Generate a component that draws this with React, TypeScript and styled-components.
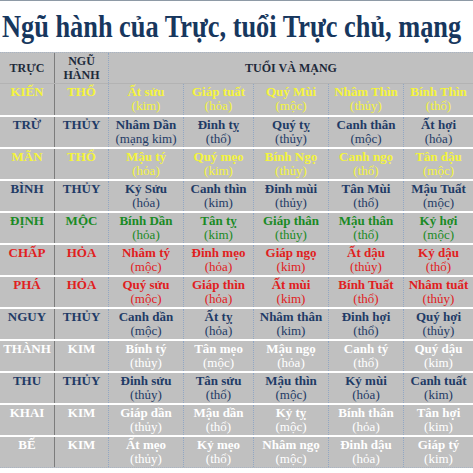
import React from "react";
import styled, { createGlobalStyle } from "styled-components";

const Global = createGlobalStyle`
  html, body { margin: 0; padding: 0; background: #ffffff; }
  body { width: 473px; height: 473px; overflow: hidden; font-family: "Liberation Serif", "Times New Roman", serif; }
`;

const Page = styled.div`
  width: 473px;
  height: 473px;
  background: #ffffff;
  border-top: 1px solid #8e9aa6;
  box-sizing: border-box;
  display: flex;
  flex-direction: column;
`;

const Title = styled.h1`
  margin: 0;
  height: 51px;
  box-sizing: border-box;
  padding: 9px 0 0 2px;
  font-family: "Liberation Serif", "Times New Roman", serif;
  font-weight: bold;
  font-size: 32px;
  line-height: 32px;
  color: #17375e;
  white-space: nowrap;
  overflow: hidden;
`;

const TitleText = styled.span`
  display: inline-block;
  transform: scaleX(0.823);
  transform-origin: left center;
`;

const Table = styled.div`
  display: flex;
  flex-direction: column;
  background: #c0c0c0;
  border-top: 1px dotted #a8b4c4;
  border-bottom: 1px dotted #a8b4c4;
`;

const COLS = "54px 54px 75px 70px 75px 75px 70px";

const HeaderRow = styled.div`
  display: grid;
  grid-template-columns: ${COLS};
  height: 31px;
  border-bottom: 1px solid #b3b3b3;
  box-sizing: border-box;
`;

const Row = styled.div<{ $first?: boolean }>`
  display: grid;
  grid-template-columns: ${COLS};
  height: ${(p) => (p.$first ? 31 : 32)}px;
  box-sizing: border-box;
  border-top: ${(p) => (p.$first ? "0" : "2px solid #ffffff")};
`;

type Divider = "none" | "solid" | "dotted";

const dividerStyle = (d: Divider) =>
  d === "solid" ? "1px solid #7c7c7c" : d === "dotted" ? "1px dotted #90a6c4" : "0";

const HeadCell = styled.div<{ $divider: Divider; $span?: number }>`
  grid-column: span ${(p) => p.$span ?? 1};
  border-left: ${(p) => dividerStyle(p.$divider)};
  display: flex;
  flex-direction: column;
  align-items: center;
  justify-content: center;
  font-weight: bold;
  font-size: 12px;
  line-height: 14px;
  color: #1e2a3a;
  text-align: center;
`;

const Cell = styled.div<{ $divider: Divider; $color: string }>`
  border-left: ${(p) => dividerStyle(p.$divider)};
  display: flex;
  flex-direction: column;
  align-items: center;
  padding-top: 1px;
  font-size: 13px;
  line-height: 14px;
  color: ${(p) => p.$color};
  text-align: center;
  white-space: nowrap;
`;

const Main = styled.span`
  font-weight: bold;
`;

const Sub = styled.span`
  font-weight: normal;
`;

const C = {
  yellow: "#f4f43c",
  navy: "#1f3b66",
  green: "#1a8a24",
  red: "#e0201e",
  white: "#ffffff",
};

type RowData = { truc: string; hanh: string; color: string; items: [string, string][] };

const rows: RowData[] = [
  { truc: "KIẾN", hanh: "THỔ", color: C.yellow, items: [["Ất sửu", "(kim)"], ["Giáp tuất", "(hỏa)"], ["Quý Mùi", "(mộc)"], ["Nhâm Thìn", "(thủy)"], ["Bính Thìn", "(thổ)"]] },
  { truc: "TRỪ", hanh: "THỦY", color: C.navy, items: [["Nhâm Dần", "(mạng kim)"], ["Đinh tỵ", "(thổ)"], ["Quý tỵ", "(thủy)"], ["Canh thân", "(mộc)"], ["Ất hợi", "(hỏa)"]] },
  { truc: "MÃN", hanh: "THỔ", color: C.yellow, items: [["Mậu tý", "(hỏa)"], ["Quý mẹo", "(kim)"], ["Bính Ngọ", "(thủy)"], ["Canh ngọ", "(thổ)"], ["Tân dậu", "(mộc)"]] },
  { truc: "BÌNH", hanh: "THỦY", color: C.navy, items: [["Kỷ Sửu", "(hỏa)"], ["Canh thìn", "(kim)"], ["Đinh mùi", "(thủy)"], ["Tân Mùi", "(thổ)"], ["Mậu Tuất", "(mộc)"]] },
  { truc: "ĐỊNH", hanh: "MỘC", color: C.green, items: [["Bính Dần", "(hỏa)"], ["Tân tỵ", "(kim)"], ["Giáp thân", "(thủy)"], ["Mậu thân", "(thổ)"], ["Kỷ hợi", "(mộc)"]] },
  { truc: "CHẤP", hanh: "HỎA", color: C.red, items: [["Nhâm tý", "(mộc)"], ["Đinh mẹo", "(hỏa)"], ["Giáp ngọ", "(kim)"], ["Ất dậu", "(thủy)"], ["Kỷ dậu", "(thổ)"]] },
  { truc: "PHÁ", hanh: "HỎA", color: C.red, items: [["Quý sửu", "(mộc)"], ["Giáp thìn", "(hỏa)"], ["Ất mùi", "(kim)"], ["Bính Tuất", "(thổ)"], ["Nhâm tuất", "(thủy)"]] },
  { truc: "NGUY", hanh: "THỦY", color: C.navy, items: [["Canh dần", "(mộc)"], ["Ất tỵ", "(hỏa)"], ["Nhâm thân", "(kim)"], ["Đinh hợi", "(thổ)"], ["Quý hợi", "(thủy)"]] },
  { truc: "THÀNH", hanh: "KIM", color: C.white, items: [["Bính tý", "(thủy)"], ["Tân mẹo", "(mộc)"], ["Mậu ngọ", "(hỏa)"], ["Canh tý", "(thổ)"], ["Quý dậu", "(kim)"]] },
  { truc: "THU", hanh: "THỦY", color: C.navy, items: [["Đinh sửu", "(thủy)"], ["Tân sửu", "(thổ)"], ["Mậu thìn", "(mộc)"], ["Kỷ mùi", "(hỏa)"], ["Canh tuất", "(kim)"]] },
  { truc: "KHAI", hanh: "KIM", color: C.white, items: [["Giáp dần", "(thủy)"], ["Mậu dần", "(thổ)"], ["Kỷ tỵ", "(mộc)"], ["Bính thân", "(hỏa)"], ["Tân hợi", "(kim)"]] },
  { truc: "BẾ", hanh: "KIM", color: C.white, items: [["Ất mẹo", "(thủy)"], ["Kỷ mẹo", "(thổ)"], ["Nhâm ngọ", "(mộc)"], ["Đinh dậu", "(hỏa)"], ["Giáp tý", "(kim)"]] },
];

export default function App() {
  return (
    <>
      <Global />
      <Page>
        <Title>
          <TitleText>Ngũ hành của Trực, tuổi Trực chủ, mạng</TitleText>
        </Title>
        <Table>
          <HeaderRow>
            <HeadCell $divider="none">TRỰC</HeadCell>
            <HeadCell $divider="solid">
              <span>NGŨ</span>
              <span>HÀNH</span>
            </HeadCell>
            <HeadCell $divider="dotted" $span={5}>TUỔI VÀ MẠNG</HeadCell>
          </HeaderRow>
          {rows.map((r, i) => (
            <Row key={r.truc} $first={i === 0}>
              <Cell $divider="none" $color={r.color}>
                <Main>{r.truc}</Main>
              </Cell>
              <Cell $divider="solid" $color={r.color}>
                <Main>{r.hanh}</Main>
              </Cell>
              {r.items.map(([m, s], j) => (
                <Cell key={j} $divider="dotted" $color={r.color}>
                  <Main>{m}</Main>
                  <Sub>{s}</Sub>
                </Cell>
              ))}
            </Row>
          ))}
        </Table>
      </Page>
    </>
  );
}
